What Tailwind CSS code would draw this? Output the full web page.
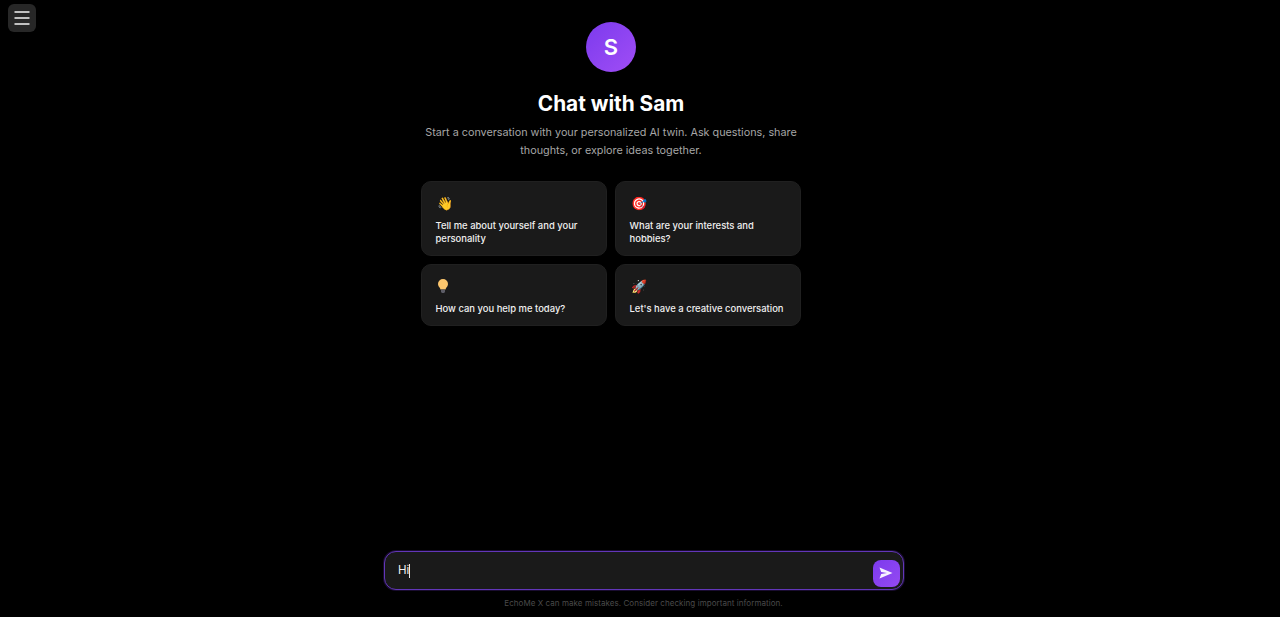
<!DOCTYPE html>
<html lang="en">
<head>
    <meta charset="UTF-8">
    <title>Chat with Sam</title>
    <script src="https://cdn.jsdelivr.net/npm/@tailwindcss/browser@4"></script>
</head>
<body class="bg-black h-[617px] overflow-hidden font-['Inter',sans-serif] text-white relative flex flex-col">
    <!-- menu button -->
    <button class="absolute left-2 top-1 w-7 h-7 rounded-md bg-[#272727] flex items-center justify-center">
        <svg width="16" height="14" viewBox="0 0 16 14" fill="none" stroke="#f5f5f5" stroke-width="1.4"><path d="M0.5 1h15M0.5 7h15M0.5 13h15"/></svg>
    </button>

    <main class="flex-1 flex flex-col items-center pt-[22px]">
        <div class="w-[380px] ml-[-58px] flex flex-col items-center">
            <div class="w-[50px] h-[50px] rounded-full bg-gradient-to-br from-[#7c3aed] to-[#a04df5] flex items-center justify-center text-[22px] font-semibold">S</div>
            <h1 class="mt-[16px] text-[20.8px] leading-8 font-bold text-center">Chat with Sam</h1>
            <p class="mt-[4px] text-[10.8px] leading-[18px] text-[#a6a6a6] text-center whitespace-nowrap">Start a conversation with your personalized AI twin. Ask questions, share<br>thoughts, or explore ideas together.</p>
            <div class="mt-[21px] grid grid-cols-2 gap-2 w-full">
                <button class="h-[75px] rounded-[10px] bg-[#1a1a1a] border border-[#202020] px-[13.5px] pt-[12px] text-left flex flex-col">
                    <span class="text-[13px] leading-[18px] pl-px">👋</span>
                    <span class="mt-[7px] text-[9.45px] leading-[13px] font-medium text-[#f0f0f0]">Tell me about yourself and your personality</span>
                </button>
                <button class="h-[75px] rounded-[10px] bg-[#1a1a1a] border border-[#202020] px-[13.5px] pt-[12px] text-left flex flex-col">
                    <span class="text-[13px] leading-[18px] pl-px">🎯</span>
                    <span class="mt-[7px] text-[9.45px] leading-[13px] font-medium text-[#f0f0f0]">What are your interests and hobbies?</span>
                </button>
                <button class="h-[62px] rounded-[10px] bg-[#1a1a1a] border border-[#202020] px-[13.5px] pt-[12px] text-left flex flex-col">
                    <span class="h-[18px] pl-[2.5px] flex items-center">
                        <svg width="10" height="14" viewBox="0 0 10 14"><path d="M5 0a5 5 0 0 0-5 5c0 2 1.3 3 2 4.200.3.500.4 1 .5 1.300h5c.1-.3.2-.8.500-1.300C8.700 8 10 7 10 5a5 5 0 0 0-5-5z" fill="#fcc66d"/><path d="M3 10.500h4V13l-1 1H4l-1-1z" fill="#5c5c66"/></svg>
                    </span>
                    <span class="mt-[7px] text-[9.45px] leading-[13px] font-medium text-[#f0f0f0]">How can you help me today?</span>
                </button>
                <button class="h-[62px] rounded-[10px] bg-[#1a1a1a] border border-[#202020] px-[13.5px] pt-[12px] text-left flex flex-col">
                    <span class="text-[13px] leading-[18px] pl-px">🚀</span>
                    <span class="mt-[7px] text-[9.45px] leading-[13px] font-medium text-[#f0f0f0] whitespace-nowrap">Let's have a creative conversation</span>
                </button>
            </div>
        </div>
    </main>

    <footer class="flex flex-col items-center pb-[8px] pl-[7px]">
        <div class="w-[520px] h-[39px] rounded-[12px] bg-[#1a1a1a] border border-[#6236b8] shadow-[0_0_0_1px_rgba(124,58,237,0.2)] pl-[13.5px] pr-[3px] flex items-center justify-between">
            <span class="text-[11.5px] text-[#f0f0f0] flex items-center">Hi<span class="w-px h-[14px] bg-[#e8e8e8]"></span></span>
            <button class="w-[27px] h-[27px] mt-[5px] rounded-lg bg-gradient-to-br from-[#7c3aed] to-[#9549f2] flex items-center justify-center">
                <svg width="14" height="12" viewBox="0 0 14 12" fill="#f8f1ff"><path d="M0.5 0.5 13.5 6 0.5 11.5 2.2 6.9 8 6 2.2 5.1z"/></svg>
            </button>
        </div>
        <p class="mt-[7px] text-[8px] leading-[12px] tracking-[0.06px] text-[#4a4a4a]">EchoMe X can make mistakes. Consider checking important information.</p>
    </footer>
</body>
</html>
